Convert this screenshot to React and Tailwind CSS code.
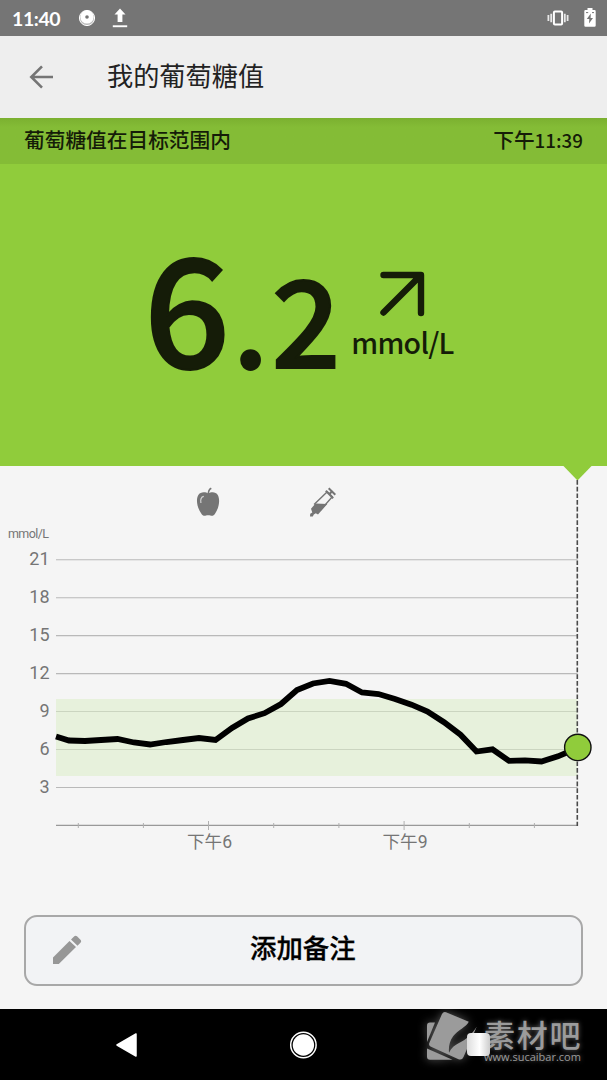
const ticks = [21, 18, 15, 12, 9, 6, 3];

const readings = [
  [56, 270.5], [69, 274.5], [85, 275], [101, 274], [117.5, 273],
  [134, 276.5], [150, 278.5], [166.5, 276], [183, 274], [199, 272],
  [215.5, 274], [232, 262], [248, 252.5], [264.5, 247.2], [281, 238],
  [297, 224], [313, 217.5], [329.5, 215], [346, 217.8], [362, 226.5],
  [378.5, 228], [395, 233], [411.5, 238.7], [427.5, 245.5], [444, 256.2],
  [460.5, 268.7], [476.5, 285.5], [492.5, 283.3], [509, 294.8], [525, 294.3],
  [541.5, 295.5], [558, 290.3], [577.5, 282],
];

const toY = (value) => 359.4 - value * 12.65;

const StatusBar = () => (
  <div className="flex h-[35.5px] shrink-0 items-center bg-[#757575] pl-3 pr-[10px] text-white">
    <span className="w-[66px] pt-px font-['Lato'] text-[19.5px] font-bold leading-none tracking-[-0.4px]">
      11:40
    </span>
    <svg width="18" height="18" viewBox="0 0 18 18">
      <circle cx="9" cy="9" r="7.6" fill="#bbb" stroke="#fff" strokeWidth="1" />
      <circle cx="9" cy="8" r="6.6" fill="#fff" />
      <circle cx="9" cy="8" r="1.8" fill="#757575" />
    </svg>
    <svg className="ml-4" width="16" height="20" viewBox="0 0 16 20" fill="#fff">
      <path d="M8 .5 13.5 6.5H10.4V14H5.6V6.5H2.5Z" />
      <path d="M.8 17.3H15.2V19.2H.8Z" />
    </svg>
    <svg className="ml-auto" width="22" height="18" viewBox="0 0 22 18">
      <rect x="6.9" y="2.4" width="8.2" height="13.2" rx="1" fill="none" stroke="#fff" strokeWidth="2" />
      <path
        d="M1.4 6V12M4.2 4.7V13.3M17.8 4.7V13.3M20.6 6V12"
        stroke="#e8e8e8"
        strokeWidth="1.8"
      />
    </svg>
    <svg className="ml-[15px] mr-px" width="12" height="19" viewBox="0 0 12 19">
      <path
        d="M3.5 0H8.5V2H10.5Q11.7 2 11.7 3.2V17.6Q11.7 18.8 10.5 18.8H1.5Q.3 18.8 .3 17.6V3.2Q.3 2 1.5 2H3.5Z"
        fill="#fff"
      />
      <path d="M6.8 5.5 2.8 11H5.3L5 15.5 9 10H6.6Z" fill="#757575" />
      <path d="M2 4.6H4.2M8 4.6H10" stroke="#757575" strokeWidth="1" />
    </svg>
  </div>
);

const Chart = () => (
  <svg
    className="block h-[434px] w-full shrink-0 font-['Roboto','Noto_Sans_CJK_SC',sans-serif]"
    viewBox="0 0 607 434"
    fill="#757575"
  >
    {/* reading pointer */}
    <path d="M562.5 -1H592.5L577.5 14.5Z" fill="#90cc3b" />

    {/* meal */}
    <path d="M208.3 27.6C211 25.8 215.8 25.6 217.9 29.2C220.4 34 218.8 42 215.3 47.2C214 49.4 212.3 50.4 210.4 49.6C208.8 49 207.6 49 206 49.6C204.1 50.4 202.4 49.4 201.1 47.2C197.4 42 195.6 34 198.2 29.2C200.3 25.6 205.6 25.8 208.3 27.6Z" />
    <path d="M208.4 28.5C208.2 25.5 209.2 23.2 211.3 22.2" fill="none" stroke="#757575" strokeWidth="1.6" />
    <path d="M200.9 37C200.2 33.4 201.2 30.9 203.8 30.4" fill="none" stroke="#d5d5d5" strokeWidth="1.2" />

    {/* insulin */}
    <path
      d="M327.3 25.7 332.3 30.7 321.1 43.4 314.6 37.9Z"
      fill="#f5f5f5"
      stroke="#757575"
      strokeWidth="1.4"
    />
    <path d="M315.5 37.6 327.3 37.9 318 48.6 315.8 47.2 313.8 48.4 312.8 50.5 310 50.6 310.2 47.8 312.3 46.4 311 42.7Z" />
    <path
      d="M325.8 24.8 333.2 32.2M329.4 28 332.7 24.7M328.7 22.3 335.3 28.8"
      fill="none"
      stroke="#757575"
      strokeWidth="2"
    />

    <text x="8" y="72.3" fontSize="12.5" textLength="41">mmol/L</text>
    <g stroke="#b9b9b9" strokeWidth="1.1">
      {ticks.map((tick) => (
        <path key={tick} d={`M56 ${toY(tick)}H577.5`} />
      ))}
    </g>
    <g fontSize="18" textAnchor="end">
      {ticks.map((tick) => (
        <text key={tick} x="49.5" y={toY(tick) + 5.6}>{tick}</text>
      ))}
    </g>

    {/* target range */}
    <rect x="56" y="233" width="521.5" height="77" fill="#daedc6" fillOpacity="0.55" />

    <path d="M56 359.4H577.5" stroke="#999" strokeWidth="1.2" />
    <path
      d="M78.3 357V362M143.4 357V362M273.7 357V362M338.9 357V362M469.3 357V362M534.4 357V362M208.5 355V364M404.1 355V364"
      stroke="#b0b0b0"
      strokeWidth="1"
    />
    <g fontSize="17.6" textAnchor="middle">
      <text x="209.5" y="381.5">下午6</text>
      <text x="405" y="381.5">下午9</text>
    </g>

    <path d="M577.3 14V360" stroke="#4a4a4a" strokeWidth="1.6" strokeDasharray="4.7 2" />
    <polyline
      points={readings.map((point) => point.join(",")).join(" ")}
      fill="none"
      stroke="#000"
      strokeWidth="5.8"
    />
    <circle cx="577.8" cy="281.4" r="13.2" fill="#90cc3b" stroke="#111" strokeWidth="1.4" />
  </svg>
);

const Watermark = () => (
  <div className="absolute left-[426px] top-0 flex text-[#9b9b9b]">
    <svg
      className="drop-shadow-[0_0_5px_rgba(255,255,255,0.35)]"
      width="52"
      height="56"
      viewBox="0 0 52 56"
      fill="currentColor"
    >
      <path d="M4 13.5H9L1 33V16.5Q1 13.5 4 13.5Z" />
      <path d="M20 3.2 42.8 12.7C40 18 32 21 27.3 27C23.5 32 22.5 38 23 43.7C25 39 29 36 33 34C41 30 45 26 50.7 17.7L37.5 48Q36 51.5 32.5 50.2L4.5 37.5Q2.4 36.3 3.3 34L16 5Q17.5 2.2 20 3.2Z" />
      <path d="M1 39.5 26.5 50.8H4Q1 50.8 1 47.8Z" />
    </svg>
    <div className="flex w-[110px] flex-col pl-[6px] pt-[8px] [text-shadow:0_0_5px_rgba(255,255,255,0.4)]">
      <span className="whitespace-nowrap font-['Noto_Sans_CJK_SC',sans-serif] text-[31px] font-medium leading-[34px] tracking-[1.7px]">
        素材吧
      </span>
      <span className="whitespace-nowrap font-['Open_Sans'] text-[11px] leading-[11px]">
        www.sucaibar.com
      </span>
    </div>
  </div>
);

const NavBar = () => (
  <div className="relative h-[71px] shrink-0 bg-black">
    <Watermark />
    <div className="relative flex h-full items-center">
      <svg className="ml-[115px]" width="24" height="26" viewBox="0 0 24 26">
        <path d="M2 13 21 2V24Z" fill="#fff" stroke="#fff" strokeWidth="1.5" strokeLinejoin="round" />
      </svg>
      <svg className="ml-[150px]" width="28" height="28" viewBox="0 0 28 28">
        <circle cx="14.4" cy="14" r="12.7" fill="none" stroke="#fff" strokeWidth="1.5" />
        <circle cx="14.4" cy="14" r="10.7" fill="#fff" />
      </svg>
      <div className="ml-[150px] h-[23px] w-[23px] rounded-sm bg-linear-to-r from-[#ddd] via-white via-55% to-[#ccc]" />
    </div>
  </div>
);

const App = () => {
  return (
    <div className="flex h-[1080px] w-[607px] flex-col overflow-hidden bg-[#f5f5f5] font-['Noto_Sans_CJK_SC',sans-serif]">
      <StatusBar />
      <header className="flex h-[82.5px] shrink-0 items-center bg-[#eeeeee] pl-[28px]">
        <svg width="26" height="26" viewBox="0 0 26 26" fill="none" stroke="#757575" strokeWidth="2.6">
          <path d="M25 13H3.5M14 2.3 3.3 13 14 23.7" />
        </svg>
        <h1 className="ml-[53px] pb-[4px] text-[26.2px] leading-none text-[#222]">我的葡萄糖值</h1>
      </header>

      <div className="flex h-[46px] shrink-0 items-center justify-between bg-[#84bc36] bg-linear-to-b from-[#7bb030] to-[#84bc36] to-20% px-6 pb-[4px] text-[#151c08]">
        <span className="text-[20.7px] font-medium leading-none">葡萄糖值在目标范围内</span>
        <span className="text-[20.7px] font-medium leading-none">
          下午<span className="text-[18.8px]">11:39</span>
        </span>
      </div>

      <div className="flex h-[302px] shrink-0 bg-[#90cc3b] pl-[144px] text-[#151c08]">
        <div className="-mt-[10.5px] flex h-[230px] items-baseline font-medium [-webkit-text-stroke:2px_#151c08]">
          <span className="text-[151px] leading-[296px] tracking-[2.5px]">6</span>
          <span className="text-[121px] leading-none tracking-[2.8px]">.2</span>
        </div>
        <div className="flex flex-col pl-[8px] pt-[106px]">
          <svg className="ml-[25px]" width="50" height="50" viewBox="0 0 50 50">
            <path
              d="M7.5 5H45V43M43 7 7.5 42.5"
              fill="none"
              stroke="#151c08"
              strokeWidth="6.4"
              strokeLinecap="round"
              strokeLinejoin="round"
            />
          </svg>
          <span className="mt-[7.5px] text-[28.5px] font-medium leading-none tracking-[-0.7px]">
            mmol/L
          </span>
        </div>
      </div>

      <Chart />

      <div className="flex grow px-6 pt-[14.5px]">
        <button className="flex h-[71px] w-full items-center rounded-[13px] border-2 border-[#a8a8a8] bg-[#f2f3f5] pl-[26px] text-black">
          <svg width="30" height="30" viewBox="0 0 30 30" fill="#979797">
            <path d="M1 22.5 17.5 6 24 12 6.8 29H1ZM19 4.5 22.3 1.3Q23.6 .3 25 1.3L28.7 5Q29.7 6.3 28.7 7.6L25.5 10.8Z" />
          </svg>
          <span className="ml-[168px] pb-[5px] text-[26.4px] font-medium leading-none [-webkit-text-stroke:0.3px_#000]">添加备注</span>
        </button>
      </div>

      <NavBar />
    </div>
  );
};

export default App;
